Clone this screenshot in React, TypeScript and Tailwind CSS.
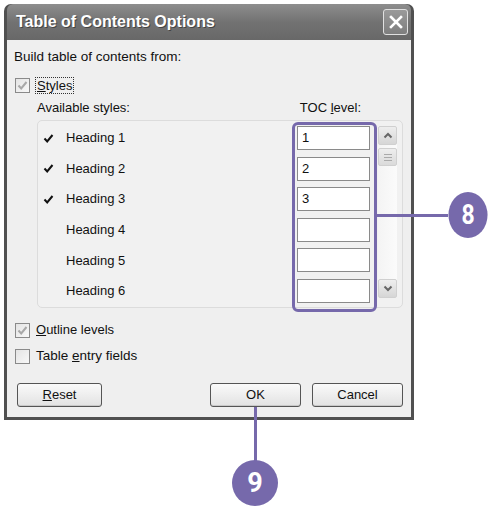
import React from "react";

const font = { fontFamily: '"Liberation Sans", Arial, sans-serif' };

function Check({ className = "" }: { className?: string }) {
  return (
    <svg width="11" height="11" viewBox="0 0 11 11" className={className}>
      <path d="M1.5 5.5 L4.2 8.5 L9.5 2" fill="none" stroke="currentColor" strokeWidth="2" />
    </svg>
  );
}

function CheckBox({ checked }: { checked: boolean }) {
  return (
    <div className="w-[15px] h-[15px] border border-[#8a8a8a] bg-gradient-to-br from-[#e4e4e4] to-[#f8f8f8] flex items-center justify-center text-[#a8a8a8]">
      {checked && <Check />}
    </div>
  );
}

function Btn({ children, w }: { children: React.ReactNode; w: string }) {
  return (
    <div
      className={`${w} h-[24px] rounded-[3px] border border-[#555] bg-gradient-to-b from-[#fafafa] to-[#e2e2e2] flex items-center justify-center text-[13px] text-[#111] shadow-[inset_0_-1px_0_#c8c8c8]`}
    >
      {children}
    </div>
  );
}

export default function App() {
  const rows = ["1", "2", "3", "", "", ""];
  return (
    <div className="relative w-[500px] h-[510px] bg-white overflow-hidden" style={font}>
      <div className="ml-[4px] mt-[4px] w-[410px] h-[416px] flex flex-col rounded-t-[7px] bg-[#505050] p-[3px] pt-0">
        {/* title bar */}
        <div className="h-[36px] shrink-0 flex items-center justify-between pl-[9px] pr-[3px] rounded-t-[6px] bg-gradient-to-b from-[#8e8e8e] via-[#727272] to-[#686868]">
          <span className="text-white font-bold text-[16px] [text-shadow:1px_1px_0_#444]">
            Table of Contents Options
          </span>
          <div className="w-[25px] h-[26px] rounded-[3px] border border-[#e0e0e0] bg-gradient-to-b from-[#9a9a9a] to-[#7e7e7e] flex items-center justify-center">
            <svg width="14" height="14" viewBox="0 0 14 14">
              <path d="M2 2 L12 12 M12 2 L2 12" stroke="white" strokeWidth="2.6" strokeLinecap="square" />
            </svg>
          </div>
        </div>
        {/* body */}
        <div className="flex-1 bg-[#efefef] flex flex-col pl-[7px] pr-[8px] pt-[8px] text-[13px] text-[#111]">
          <div className="h-[18px] flex items-center text-[13.5px]">Build table of contents from:</div>
          <div className="h-[18px] mt-[10px] flex items-center gap-[5px] pl-[1px]">
            <CheckBox checked />
            <span className="border border-dotted border-[#333] px-[1px] leading-[15px]">
              <u>S</u>tyles
            </span>
          </div>
          <div className="h-[16px] mt-[6px] flex items-center justify-between pl-[23px] pr-[42px]">
            <span>Available styles:</span>
            <span>
              TOC <u>l</u>evel:
            </span>
          </div>
          <div className="relative mt-[4px] ml-[23px] h-[188px] rounded-[5px] border border-[#dcdcdc] bg-[#f1f1f1] flex">
            <div className="flex-1 flex flex-col pt-[5px] gap-[6.6px]">
              {rows.map((v, i) => (
                <div key={i} className="h-[24px] flex items-center">
                  <div className="w-[17px] pl-[5px] flex text-[#111]">
                    {i < 3 && <Check />}
                  </div>
                  <span className="ml-[11px] flex-1">Heading {i + 1}</span>
                  <div className="w-[73px] h-[24px] border border-[#8a8a8a] bg-white flex items-center pl-[4px] mr-[8px]">
                    {v}
                  </div>
                </div>
              ))}
            </div>
            <div className="w-[19px] mr-[5px] mt-[5px] mb-[9px] flex flex-col rounded-[2px] bg-gradient-to-r from-[#f4f4f4] to-[#fbfbfb]">
              <div className="h-[19px] rounded-[2px] border border-[#d0d0d0] bg-gradient-to-b from-[#eeeeee] to-[#d6d6d6] flex items-center justify-center">
                <svg width="10" height="7" viewBox="0 0 10 7">
                  <path d="M1.5 5.5 L5 2 L8.5 5.5" fill="none" stroke="#666" strokeWidth="2" />
                </svg>
              </div>
              <div className="mt-[3px] h-[18px] rounded-[2px] border border-[#d0d0d0] bg-gradient-to-b from-[#eeeeee] to-[#dadada] flex flex-col items-center justify-center gap-[2px]">
                <div className="w-[8px] h-[1px] bg-[#aaa]" />
                <div className="w-[8px] h-[1px] bg-[#aaa]" />
                <div className="w-[8px] h-[1px] bg-[#aaa]" />
              </div>
              <div className="flex-1" />
              <div className="h-[19px] rounded-[2px] border border-[#d0d0d0] bg-gradient-to-b from-[#eeeeee] to-[#d6d6d6] flex items-center justify-center">
                <svg width="10" height="7" viewBox="0 0 10 7">
                  <path d="M1.5 1.5 L5 5 L8.5 1.5" fill="none" stroke="#666" strokeWidth="2" />
                </svg>
              </div>
            </div>
            {/* callout outline */}
            <div className="absolute left-[254px] top-[1px] w-[85px] h-[190px] rounded-[6px] border-[3px] border-[#7669ab]" />
          </div>
          <div className="h-[18px] mt-[13px] flex items-center gap-[6px] pl-[1px]">
            <CheckBox checked />
            <span>
              <u>O</u>utline levels
            </span>
          </div>
          <div className="h-[18px] mt-[8px] flex items-center gap-[6px] pl-[1px]">
            <CheckBox checked={false} />
            <span className="text-[13.5px]">
              Table <u>e</u>ntry fields
            </span>
          </div>
          <div className="mt-[18px] flex items-center pl-[3px]">
            <Btn w="w-[85px]">
              <span>
                <u>R</u>eset
              </span>
            </Btn>
            <div className="flex-1" />
            <Btn w="w-[91px]">OK</Btn>
            <div className="w-[11px]" />
            <Btn w="w-[91px]">Cancel</Btn>
          </div>
        </div>
      </div>

      {/* callout 8 */}
      <div className="absolute left-[376px] top-[214px] w-[72px] h-[3px] bg-[#7669ab]" />
      <div className="absolute left-[445px] top-[192px] w-[46px] h-[46px] rounded-full bg-[#7669ab] flex items-center justify-center text-white font-bold text-[27px] [transform:scaleX(0.85)]" style={{ fontFamily: '"Roboto", sans-serif' }}>
        8
      </div>
      {/* callout 9 */}
      <div className="absolute left-[254px] top-[407px] w-[3px] h-[55px] bg-[#7669ab]" />
      <div className="absolute left-[232px] top-[460px] w-[46px] h-[46px] rounded-full bg-[#7669ab] flex items-center justify-center text-white font-bold text-[27px]" style={{ fontFamily: '"Roboto", sans-serif' }}>
        9
      </div>
    </div>
  );
}
